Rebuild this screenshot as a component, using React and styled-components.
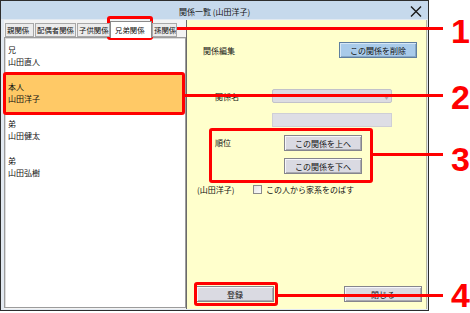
import React from 'react';
import styled, { createGlobalStyle } from 'styled-components';

// Colours taken from the dialog
const colors = {
  frame: '#e2e9f1',
  title: '#c6d9ec',
  panel: '#ffffcc',
  selected: '#ffc966',
  red: '#ff0000',
  text: '#111111',
};

const font = `'Noto Sans CJK JP', 'Noto Sans', sans-serif`;

const GlobalStyle = createGlobalStyle`
  html, body {
    margin: 0;
    padding: 0;
    background: #ffffff;
  }
`;

const Page = styled.div`
  position: relative;
  width: 470px;
  height: 313px;
  overflow: hidden;
  background: #ffffff;
  font-family: ${font};
  font-size: 8px;
  color: ${colors.text};
`;

const Window = styled.div`
  width: 429px;
  height: 311px;
  box-sizing: border-box;
  border: 1px solid #2d2d2d;
  display: flex;
  flex-direction: column;
  background: ${colors.frame};
`;

const TitleBar = styled.div`
  height: 18px;
  display: grid;
  grid-template-columns: 1fr auto 1fr;
  align-items: center;
  background: ${colors.title};
`;

const Title = styled.div`
  grid-column: 2;
  font-size: 8px;
  line-height: 18px;
  padding-top: 2px;
`;

const CloseButton = styled.div`
  grid-column: 3;
  justify-self: end;
  margin-right: 6px;
  width: 13px;
  height: 12px;
  display: flex;
  align-items: center;
  justify-content: center;
`;

const Body = styled.div`
  flex: 1;
  display: flex;
  padding: 1px 1px 1px 3px;
  min-height: 0;
`;

const LeftPane = styled.div`
  width: 182px;
  display: flex;
  flex-direction: column;
  background: #f3f3f3;
`;

const TabStrip = styled.div`
  height: 17px;
  display: flex;
  align-items: flex-end;
  padding-left: 1px;
  position: relative;
  z-index: 1;
`;

const Tab = styled.div`
  width: ${p => p.$w}px;
  height: ${p => (p.$active ? 17 : 14)}px;
  margin-right: ${p => p.$gap || 0}px;
  margin-bottom: ${p => (p.$active ? -1 : 0)}px;
  box-sizing: border-box;
  border: 1px solid ${p => (p.$active ? '#8a8a8a' : '#a8a8a8')};
  border-bottom: ${p => (p.$active ? 'none' : '1px solid #a8a8a8')};
  background: ${p => (p.$active ? '#ffffff' : '#ececec')};
  padding-left: ${p => (p.$active ? 4 : 1)}px;
  line-height: ${p => (p.$active ? 15 : 12)}px;
  white-space: nowrap;
  overflow: hidden;
  font-size: 7.4px;
`;

const List = styled.div`
  flex: 1;
  background: #ffffff;
  border: 1px solid #9c9c9c;
  box-shadow: inset 1px 1px 0 #dcdcdc;
  margin-bottom: 1px;
`;

const Item = styled.div`
  height: 37px;
  box-sizing: border-box;
  padding: 6px 3px 0;
  line-height: 12px;
  background: ${p => (p.$selected ? colors.selected : 'transparent')};
`;

const RightPane = styled.div`
  flex: 1;
  display: flex;
  flex-direction: column;
  background: ${colors.panel};
  border-left: 1px solid #6a6a6a;
  border-right: 1px solid #b8b8a0;
  padding-top: 22px;
`;

const EditRow = styled.div`
  display: flex;
  align-items: center;
  height: 16px;
  padding-left: 16px;
`;

const Button = styled.div`
  width: 78px;
  height: 16px;
  box-sizing: border-box;
  display: flex;
  align-items: center;
  justify-content: center;
  font-size: 8px;
  border: 1px solid ${p => (p.$blue ? '#5f7f9f' : '#85858d')};
  background: ${p => (p.$blue ? '#a9cbea' : '#dadae2')};
  box-shadow: inset 1px 1px 0 ${p => (p.$blue ? '#d6e7f6' : '#f6f6fa')},
    inset -1px -1px 0 ${p => (p.$blue ? '#86a8c8' : '#a9a9b1')};
  margin-left: ${p => (p.$pushRight ? 'auto' : '0')};
  margin-right: ${p => p.$mr || 0}px;
  color: ${p => (p.$muted ? '#555' : colors.text)};
`;

const FieldRow = styled.div`
  display: grid;
  grid-template-columns: 57px 120px;
  align-items: center;
  height: 14px;
  padding-left: 28px;
  margin-top: ${p => p.$mt}px;
`;

const Combo = styled.div`
  height: 14px;
  box-sizing: border-box;
  border: 1px solid #c2c2ca;
  border-radius: 2px;
  background: #dcdce2;
  display: flex;
  align-items: center;
  justify-content: flex-end;
  padding-right: 2px;
  color: #a8a8b0;
  font-size: 5px;
`;

const TextBox = styled.div`
  height: 14px;
  box-sizing: border-box;
  border: 1px solid #cfcfd6;
  background: #dedee5;
`;

const OrderGroup = styled.div`
  display: grid;
  grid-template-columns: 69px auto;
  padding-left: 28px;
  margin-top: 8px;
`;

const OrderLabel = styled.div`
  line-height: 16px;
`;

const ButtonStack = styled.div`
  display: flex;
  flex-direction: column;
  gap: 7px;
`;

const CheckRow = styled.div`
  display: grid;
  grid-template-columns: 52px 9px auto;
  column-gap: 4px;
  align-items: center;
  height: 12px;
  padding-left: 10px;
  margin-top: 9px;
`;

const CheckBox = styled.div`
  width: 9px;
  height: 9px;
  box-sizing: border-box;
  border: 1px solid #8b8b8b;
  background: linear-gradient(135deg, #e4e4e4, #fafafa);
`;

const BottomRow = styled.div`
  margin-top: auto;
  display: flex;
  justify-content: space-between;
  align-items: flex-end;
  padding: 0 4px 7px 9px;
`;

// Red callouts drawn over the screenshot
const RedBox = styled.div`
  position: absolute;
  left: ${p => p.$x}px;
  top: ${p => p.$y}px;
  width: ${p => p.$w}px;
  height: ${p => p.$h}px;
  box-sizing: border-box;
  border: 3px solid ${colors.red};
  border-radius: 3px;
`;

const RedLine = styled.div`
  position: absolute;
  left: ${p => p.$x}px;
  top: ${p => p.$y}px;
  width: ${p => p.$w}px;
  height: 3px;
  background: ${colors.red};
`;

const Callout = styled.div`
  position: absolute;
  left: 451px;
  top: ${p => p.$y}px;
  width: 18px;
  text-align: center;
  font-family: 'Liberation Sans', Arial, sans-serif;
  font-weight: 700;
  font-size: 34px;
  line-height: 32px;
  color: ${colors.red};
`;

const tabs = [
  { label: '親関係', w: 29, gap: 1 },
  { label: '配偶者関係', w: 41, gap: 1 },
  { label: '子供関係', w: 33 },
  { label: '兄弟関係', w: 42, active: true },
  { label: '孫関係', w: 25 },
];

const people = [
  { rel: '兄', name: '山田直人' },
  { rel: '本人', name: '山田洋子', selected: true },
  { rel: '弟', name: '山田健太' },
  { rel: '弟', name: '山田弘樹' },
];

const callouts = [
  { n: '1', y: 15 },
  { n: '2', y: 81 },
  { n: '3', y: 143 },
  { n: '4', y: 279 },
];

const App = () => {
  return (
    <Page>
      <GlobalStyle />
      <Window>
        <TitleBar>
          <Title>関係一覧 (山田洋子)</Title>
          <CloseButton>
            <svg width="12" height="11" viewBox="0 0 12 11">
              <path d="M1 0.5 L11 10.5 M11 0.5 L1 10.5" stroke="#1a1a1a" strokeWidth="1.4" />
            </svg>
          </CloseButton>
        </TitleBar>
        <Body>
          <LeftPane>
            <TabStrip>
              {tabs.map(t => (
                <Tab key={t.label} $w={t.w} $gap={t.gap} $active={t.active}>
                  {t.label}
                </Tab>
              ))}
            </TabStrip>
            <List>
              {people.map((p, i) => (
                <Item key={i} $selected={p.selected}>
                  <div>{p.rel}</div>
                  <div>{p.name}</div>
                </Item>
              ))}
            </List>
          </LeftPane>
          <RightPane>
            <EditRow>
              <span>関係編集</span>
              <Button $blue $pushRight $mr={9}>この関係を削除</Button>
            </EditRow>
            <FieldRow $mt={31}>
              <span>関係名</span>
              <Combo>▼</Combo>
            </FieldRow>
            <FieldRow $mt={10}>
              <span />
              <TextBox />
            </FieldRow>
            <OrderGroup>
              <OrderLabel>順位</OrderLabel>
              <ButtonStack>
                <Button>この関係を上へ</Button>
                <Button>この関係を下へ</Button>
              </ButtonStack>
            </OrderGroup>
            <CheckRow>
              <span>(山田洋子)</span>
              <CheckBox />
              <span>この人から家系をのばす</span>
            </CheckRow>
            <BottomRow>
              <Button>登録</Button>
              <Button>閉じる</Button>
            </BottomRow>
          </RightPane>
        </Body>
      </Window>

      <RedBox $x={107} $y={16} $w={46} $h={24} />
      <RedBox $x={3} $y={72} $w={182} $h={43} />
      <RedBox $x={209} $y={128} $w={164} $h={55} />
      <RedBox $x={194} $y={282} $w={84} $h={24} />

      <RedLine $x={153} $y={27} $w={290} />
      <RedLine $x={185} $y={94} $w={258} />
      <RedLine $x={373} $y={153} $w={70} />
      <RedLine $x={278} $y={294} $w={165} />

      {callouts.map(c => (
        <Callout key={c.n} $y={c.y}>{c.n}</Callout>
      ))}
    </Page>
  );
};

export default App;
